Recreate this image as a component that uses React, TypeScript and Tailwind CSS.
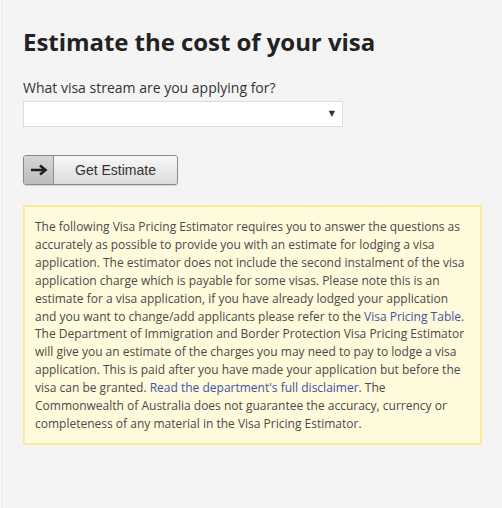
import React from "react";

export default function App() {
  return (
    <div className="w-[502px] h-[508px] bg-[#f4f4f4] border-l border-[#fafafa] overflow-hidden" style={{ fontFamily: '"Open Sans", sans-serif' }}>
      <div className="h-full border-l border-[#ebebeb] pl-[21px] pr-[20px] pt-[26px]">
        <h1 className="text-[24px] leading-[32px] font-bold text-[#222] tracking-[-0.05px]">
          Estimate the cost of your visa
        </h1>
        <label className="block mt-[20px] text-[14px] leading-[20px] text-[#333]">
          What visa stream are you applying for?
        </label>
        <div className="mt-[3px] w-[320px] h-[26px] bg-white border border-[#dcdcdc] flex items-center justify-end pr-[7px]">
          <span className="text-[8px] text-[#333]" style={{ fontFamily: '"DejaVu Sans", sans-serif' }}>▼</span>
        </div>
        <div className="mt-[28px] flex w-[155px] h-[30px] rounded-[3px] border border-[#8a8a8a] overflow-hidden shadow-[0_1px_1px_rgba(0,0,0,0.15)]">
          <div className="w-[30px] h-full flex items-center justify-center bg-gradient-to-b from-[#d6d6d6] to-[#bdbdbd] border-r border-[#8f8f8f]">
            <svg width="18" height="12" viewBox="0 0 18 12">
              <path d="M1 6 H15" stroke="#1f1f1f" strokeWidth="2.6" strokeLinecap="butt" />
              <path d="M10 1.5 L15.5 6 L10 10.5" stroke="#1f1f1f" strokeWidth="2.6" fill="none" strokeLinejoin="miter" />
            </svg>
          </div>
          <div className="flex-1 h-full flex items-center justify-center bg-gradient-to-b from-[#f8f8f8] to-[#dcdcdc] text-[14px] text-[#333]" style={{ fontFamily: '"Liberation Sans", Arial, sans-serif' }}>
            Get Estimate
          </div>
        </div>
        <div className="mt-[20px] w-[459px] border-2 border-[#fbec9c] bg-[#fffadb] pt-[11px] pb-[10px] pl-[10px] pr-[8px] text-[12px] leading-[17.9px] text-[#4a4a4a]">
          The following Visa Pricing Estimator requires you to answer the questions as accurately as possible to provide you with an estimate for lodging a visa application. The estimator does not include the second instalment of the visa application charge which is payable for some visas. Please note this is an estimate for a visa application, if you have already lodged your application and you want to change/add applicants please refer to the{" "}
          <a className="text-[#3b56a6]">Visa Pricing Table</a>. The Department of Immigration and Border Protection Visa Pricing Estimator will give you an estimate of the charges you may need to pay to lodge a visa application. This is paid after you have made your application but before the visa can be granted.{" "}
          <a className="text-[#3b56a6]">Read the department's full disclaimer</a>. The Commonwealth of Australia does not guarantee the accuracy, currency or completeness of any material in the Visa Pricing Estimator.
        </div>
      </div>
    </div>
  );
}
